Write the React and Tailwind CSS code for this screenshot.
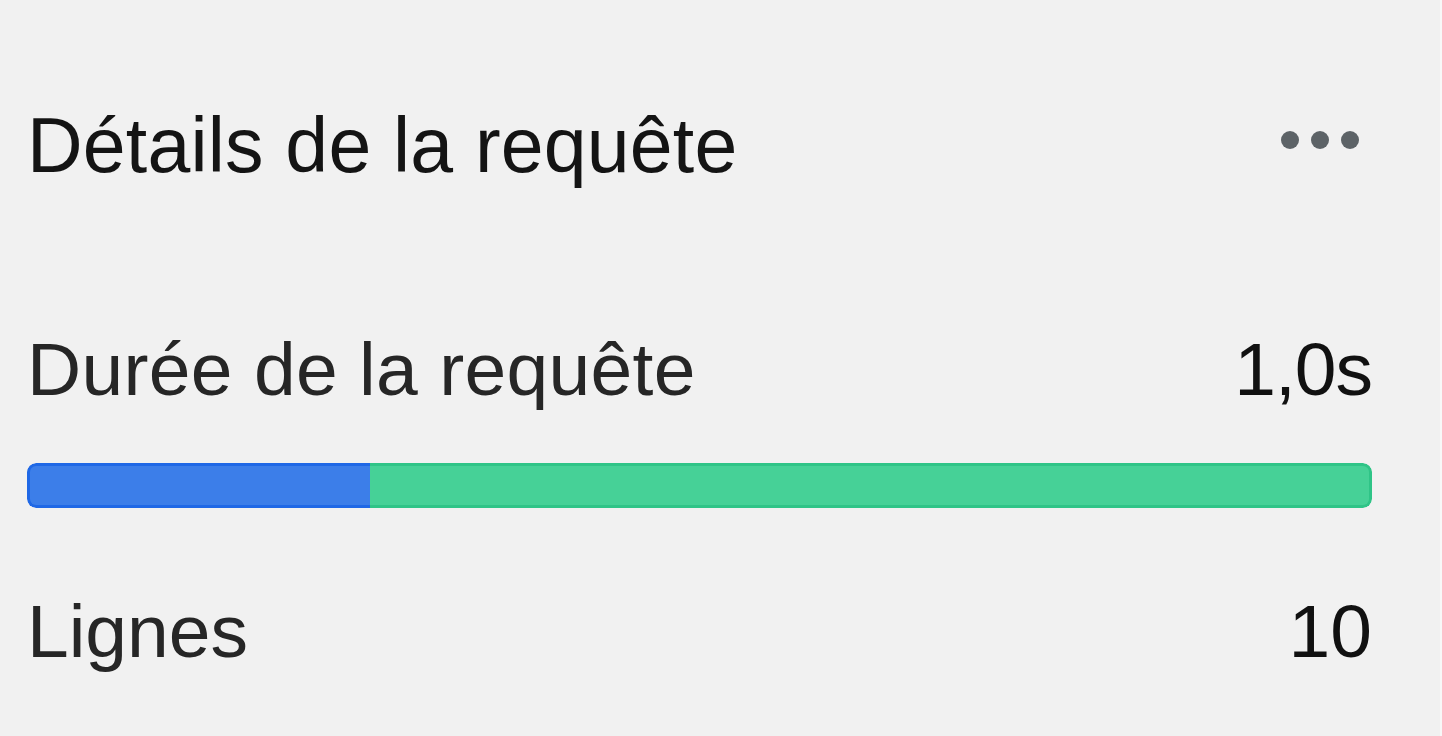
import React from "react";

const stats = { duration: "1,0s", rows: "10", split: 25.5 };

const App = () => {
  return (
    <div className="h-[736px] w-[1442px] overflow-hidden bg-[#f1f1f1] font-['Liberation_Sans',Arial,sans-serif]">
      <div className="h-full w-full border-r-2 border-[#f8f8f8] pl-[27px] pr-[68px] pt-[107px]">
        {/* Header */}
        <div className="flex items-center justify-between">
          <h2 className="text-[77px] leading-[77px] tracking-[0.2px] text-[#141414]">Détails de la requête</h2>
          <div className="mr-[13px] -mt-[12px] flex gap-[12px]">
            <span className="h-[18px] w-[18px] rounded-full bg-[#5d6367]" />
            <span className="h-[18px] w-[18px] rounded-full bg-[#5d6367]" />
            <span className="h-[18px] w-[18px] rounded-full bg-[#5d6367]" />
          </div>
        </div>

        {/* Duration */}
        <div className="mt-[148px] flex items-center justify-between text-[75px] leading-[75px]">
          <span className="tracking-[0.3px] text-[#262626]">Durée de la requête</span>
          <span className="tracking-[-1px] text-[#111111]">{stats.duration}</span>
        </div>

        <div className="mt-[56px] flex h-[45px] w-full overflow-hidden rounded-[9px]">
          <div
            className="h-full rounded-l-[9px] border-[3px] border-r-0 border-[#1f68e6] bg-[#3c7ee9]"
            style={{ width: `${stats.split}%` }}
          />
          <div className="h-full flex-1 rounded-r-[9px] border-[3px] border-l-0 border-[#2fc487] bg-[#46d197]" />
        </div>

        {/* Rows */}
        <div className="mt-[86px] flex items-center justify-between text-[75px] leading-[75px]">
          <span className="text-[#262626]">Lignes</span>
          <span className="text-[#111111]">{stats.rows}</span>
        </div>
      </div>
    </div>
  );
};

export default App;
